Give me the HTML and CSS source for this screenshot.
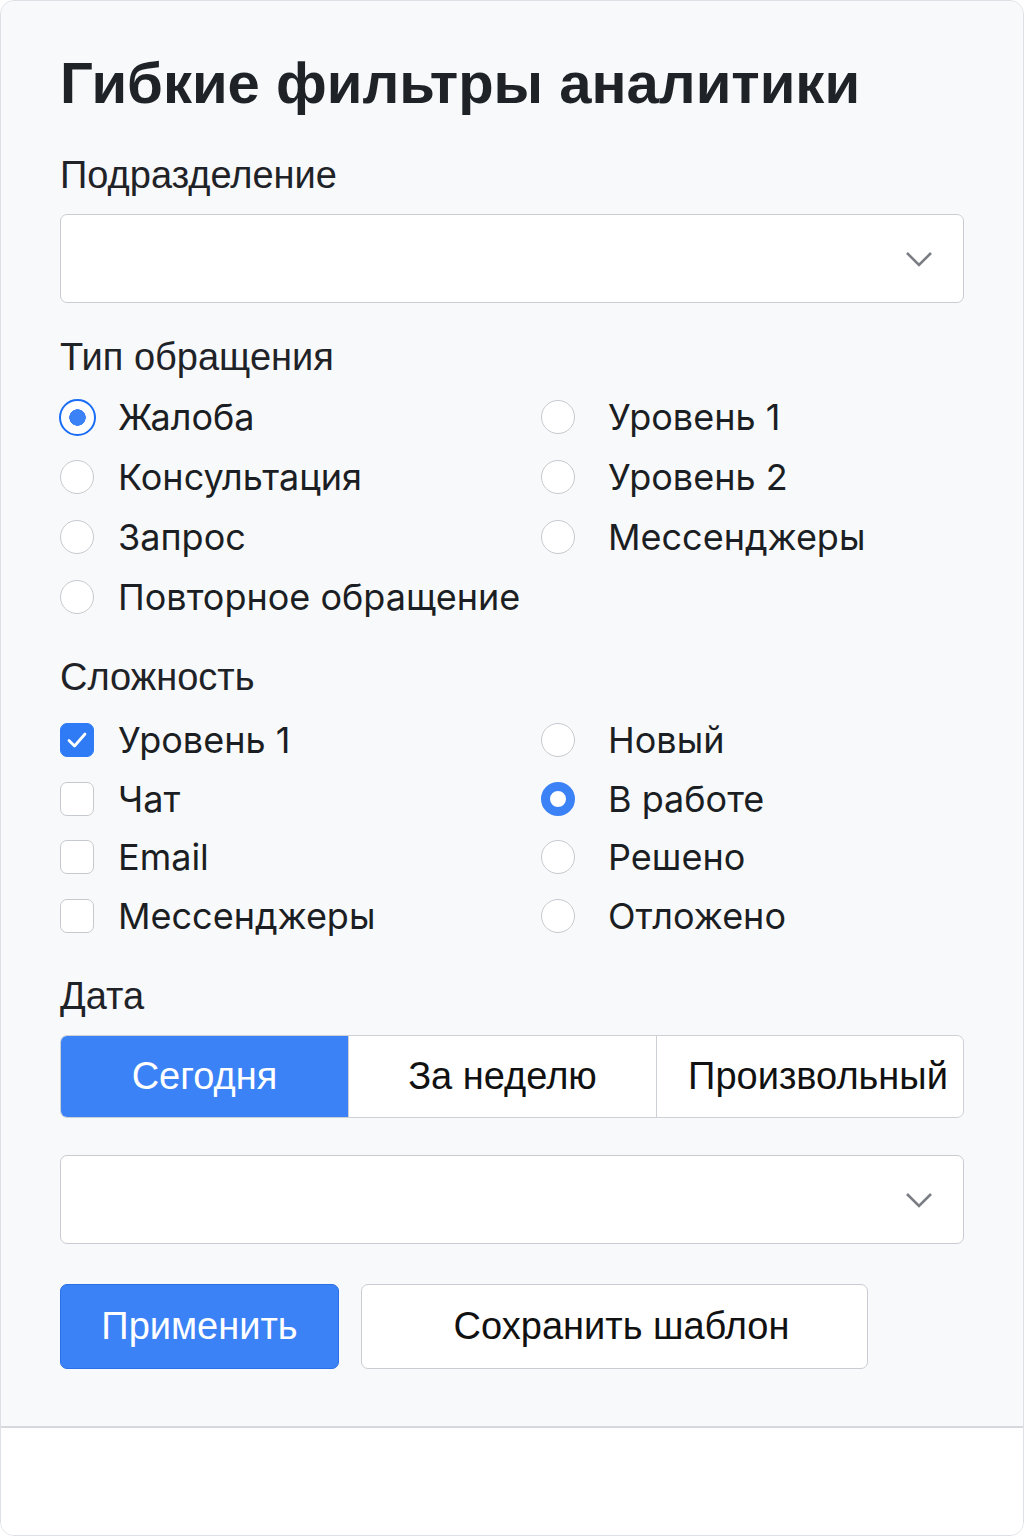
FILE: index.html
```html
<!DOCTYPE html>
<html lang="ru">
<head>
    <meta charset="UTF-8">
    <meta name="viewport" content="width=device-width, initial-scale=1.0">
    <title>Гибкие фильтры аналитики</title>
    <link rel="stylesheet" href="styles.css">
</head>
<body>
    <div class="card">
        <div class="panel">
            <h1>Гибкие фильтры аналитики</h1>

            <div class="field-label">Подразделение</div>
            <div class="select">
                <svg class="chevron" width="28" height="16" viewBox="0 0 28 16"><path d="M2 2 L14 14 L26 2" fill="none" stroke="#7a7e84" stroke-width="2.6"/></svg>
            </div>

            <div class="field-label">Тип обращения</div>
            <div class="options">
                <div class="option"><span class="radio checked"></span>Жалоба</div>
                <div class="option"><span class="radio"></span>Уровень 1</div>
                <div class="option"><span class="radio"></span>Консультация</div>
                <div class="option"><span class="radio"></span>Уровень 2</div>
                <div class="option"><span class="radio"></span>Запрос</div>
                <div class="option"><span class="radio"></span>Мессенджеры</div>
                <div class="option"><span class="radio"></span>Повторное обращение</div>
            </div>

            <div class="field-label">Сложность</div>
            <div class="options tight">
                <div class="option"><span class="check checked"><svg width="22" height="18" viewBox="0 0 22 18"><path d="M3 9.5 L8.5 15 L19 3" fill="none" stroke="#fff" stroke-width="2.8" stroke-linecap="round" stroke-linejoin="round"/></svg></span>Уровень 1</div>
                <div class="option"><span class="radio"></span>Новый</div>
                <div class="option"><span class="check"></span>Чат</div>
                <div class="option"><span class="radio bold"></span>В работе</div>
                <div class="option"><span class="check"></span>Email</div>
                <div class="option"><span class="radio"></span>Решено</div>
                <div class="option"><span class="check"></span>Мессенджеры</div>
                <div class="option"><span class="radio"></span>Отложено</div>
            </div>

            <div class="field-label">Дата</div>
            <div class="segments">
                <div class="segment active">Сегодня</div>
                <div class="segment">За неделю</div>
                <div class="segment last">Произвольный</div>
            </div>

            <div class="select second">
                <svg class="chevron" width="28" height="16" viewBox="0 0 28 16"><path d="M2 2 L14 14 L26 2" fill="none" stroke="#7a7e84" stroke-width="2.6"/></svg>
            </div>

            <div class="actions">
                <button class="btn primary">Применить</button>
                <button class="btn">Сохранить шаблон</button>
            </div>
        </div>
        <div class="footer"></div>
    </div>
</body>
</html>
```

FILE: styles.css
```css
body {
    margin: 0;
    background: #ffffff;
    font-family: Inter, "Noto Sans", sans-serif;
    color: #1b1e22;
}

.card {
    height: 1536px;
    box-sizing: border-box;
    border: 1px solid #dde1e6;
    border-radius: 14px;
    overflow: hidden;
    display: flex;
    flex-direction: column;
}

.panel {
    background: #f8f9fb;
    padding: 46px 59px 0 59px;
    height: 1427px;
    box-sizing: border-box;
    border-bottom: 2px solid #d5d9de;
}

.footer {
    flex: 1;
    background: #ffffff;
}

h1 {
    font-family: "Liberation Sans", Arial, sans-serif;
    font-size: 58px;
    font-weight: bold;
    line-height: 72px;
    margin: 0 0 36px 0;
    color: #1f2328;
}

.field-label {
    font-family: "Liberation Sans", Arial, sans-serif;
    font-size: 38px;
    line-height: 40px;
    color: #1f2328;
}

.select {
    height: 89px;
    margin-top: 19px;
    background: #ffffff;
    border: 1px solid #c9cdd2;
    border-radius: 7px;
    box-sizing: border-box;
    display: flex;
    align-items: center;
    justify-content: flex-end;
    padding-right: 30px;
    margin-bottom: 34px;
}

.select.second {
    margin-top: 37px;
    margin-bottom: 0;
}

.chevron {
    display: block;
}

.options {
    display: grid;
    grid-template-columns: 481px 1fr;
    grid-auto-rows: 60px;
    margin-top: 10px;
    margin-bottom: 30px;
}

.options.tight {
    grid-auto-rows: 58.5px;
    margin-top: 14px;
    margin-bottom: 31px;
}

.option {
    display: flex;
    align-items: center;
    font-size: 36px;
    color: #1b1e22;
}

.radio {
    width: 34px;
    height: 34px;
    border: 1.5px solid #c6cacf;
    border-radius: 50%;
    background: #ffffff;
    box-sizing: border-box;
    margin-right: 24px;
    flex-shrink: 0;
}

.option:nth-child(even) .radio,
.option:nth-child(even) .check {
    margin-right: 33px;
}

.radio.checked {
    border: 2.5px solid #1a6ef5;
    background: radial-gradient(circle, #3b82f6 0 8px, #ffffff 8.5px);
    width: 37px;
    height: 37px;
    margin-left: -1px;
    margin-right: 22px;
}

.radio.bold {
    border: 9px solid #3b82f6;
}

.check {
    width: 34px;
    height: 34px;
    border: 1.5px solid #c6cacf;
    border-radius: 7px;
    background: #ffffff;
    box-sizing: border-box;
    margin-right: 24px;
    flex-shrink: 0;
    display: flex;
    align-items: center;
    justify-content: center;
}

.check.checked {
    background: #2f7bf6;
    border-color: #2f7bf6;
}

.segments {
    display: grid;
    grid-template-columns: 287px 308px 1fr;
    height: 81px;
    margin-top: 19px;
    border: 1px solid #cdd1d6;
    border-radius: 7px;
    overflow: hidden;
    background: #ffffff;
}

.segment {
    display: flex;
    align-items: center;
    justify-content: center;
    font-family: "Liberation Sans", Arial, sans-serif;
    font-size: 38px;
    color: #111;
    border-left: 1px solid #cdd1d6;
}

.segment:first-child {
    border-left: none;
}

.segment.last {
    padding-left: 16px;
}

.segment.active {
    background: #3b82f6;
    color: #ffffff;
}

.actions {
    display: flex;
    gap: 22px;
    margin-top: 40px;
}

.btn {
    height: 85px;
    font-family: "Liberation Sans", Arial, sans-serif;
    font-size: 38px;
    border-radius: 7px;
    background: #ffffff;
    border: 1px solid #c9cdd2;
    color: #111;
    width: 507px;
    padding: 0 0 0 14px;
}

.btn.primary {
    width: 279px;
    padding: 0;
    background: #3b82f6;
    border-color: #2a6fe8;
    color: #ffffff;
}
```
